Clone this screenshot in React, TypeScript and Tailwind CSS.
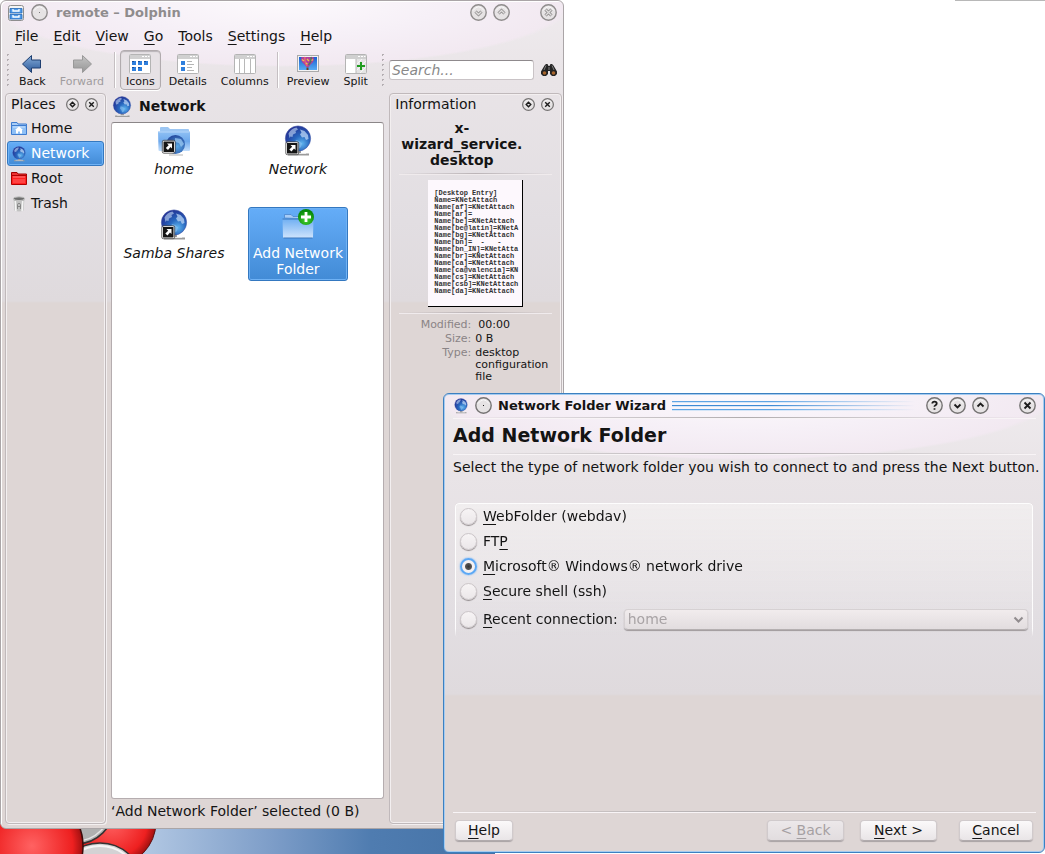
import React, { useId, useState } from 'react';
import clsx from 'clsx';

const windowBg =
  'bg-[radial-gradient(ellipse_52%_66px_at_50%_0px,#fdfafd_0%,#f6f0f7_55%,#f2e9f1_97%,transparent_100%),linear-gradient(to_bottom,#efebee_0px,#e9e4e7_80px,#e2dee2_220px,#dfdadd_300px,#ded6d5_302px)]';

interface IconProps {
  size?: number;
  className?: string;
}

const Globe: React.FC<IconProps & { link?: boolean }> = ({ size = 32, className, link }) => {
  const id = useId();
  return (
    <svg width={size} height={size} viewBox="0 0 32 32" className={clsx('shrink-0', className)} aria-hidden="true">
      <defs>
        <radialGradient id={id} cx="0.65" cy="0.7" r="0.8">
          <stop offset="0" stopColor="#5fb4ee" />
          <stop offset="0.4" stopColor="#2868bf" />
          <stop offset="1" stopColor="#22288c" />
        </radialGradient>
      </defs>
      <path d="M14 26h5v2.500h8v2H6v-2h8z" fill="#9b9b9b" />
      <path d="M9 28.500h15" stroke="#ececec" strokeWidth="1" />
      <circle cx="16" cy="13.5" r="12.600" fill={`url(#${id})`} stroke="#4356a6" strokeWidth="0.6" />
      <path d="M6.500 8.500Q9 3.500 14.500 2.500L16 4.500 13.500 6 14 8 11 9.500 10.500 12 8.500 11.500 7.500 13z" fill="#b9cff0" opacity=".65" />
      <path d="M18 4.500L22.500 6 26 10 26.500 14 24 15 22.500 12 20 12.500 18 9.500 19.500 7.500z" fill="#bcd6f6" opacity=".75" />
      <path d="M14 15l3.500 1 2.500 2.500-1 3.500-2.500 2-1.500-3.500-2-2.500z" fill="#8cc3f2" opacity=".6" />
      {link && <LinkMark />}
    </svg>
  );
};

const LinkMark = () => (
  <g>
    <rect x="4.500" y="17.500" width="11.500" height="11.500" rx="1" fill="#151515" stroke="#fff" />
    <rect x="3.800" y="16.800" width="12.900" height="12.900" rx="1.500" fill="none" stroke="#444" strokeWidth=".8" />
    <path d="M8.500 20H13.500V25L12 23.500L9.500 26.500L7.300 24.600L10.200 21.700z" fill="#fff" />
  </g>
);

const HomeLinkIcon = () => (
  <svg width="34" height="32" viewBox="0 0 34 32" aria-hidden="true">
    <defs>
      <linearGradient id="folderFill" x1="0" y1="0" x2="0" y2="1">
        <stop offset="0" stopColor="#8fc0f4" />
        <stop offset="0.5" stopColor="#6ea9ec" />
        <stop offset="1" stopColor="#c3defb" />
      </linearGradient>
      <radialGradient id="homeGlobe" cx="0.6" cy="0.6" r="0.7">
        <stop offset="0" stopColor="#5aa9e6" />
        <stop offset="1" stopColor="#1c3c93" />
      </radialGradient>
    </defs>
    <path d="M3 8V3q0-1 1-1h7l2 2h18q1 0 1 1v4z" fill="#9cc6f3" />
    <path d="M1 6.500h32V25q0 1-1 1H2.500q-1 0-1-1z" fill="url(#folderFill)" />
    <path d="M1.500 7h31" stroke="#b7d7fa" />
    <circle cx="18.500" cy="19.500" r="9.500" fill="url(#homeGlobe)" />
    <path d="M18 13l6 1 3 5-3 3-2-4-4-1z" fill="#a0cdf3" opacity=".7" />
    <path d="M12 30h14" stroke="#b5b5b5" strokeWidth="1" />
    <g transform="translate(1.500 -1.500)"><LinkMark /></g>
  </svg>
);

const AddFolderIcon = () => (
  <svg width="34" height="32" viewBox="0 0 34 32" aria-hidden="true">
    <defs>
      <linearGradient id="addFolder" x1="0" y1="0" x2="0" y2="1">
        <stop offset="0" stopColor="#6eaef2" />
        <stop offset="1" stopColor="#cfe4fc" />
      </linearGradient>
      <radialGradient id="addGreen" cx="0.5" cy="0.7" r="0.6">
        <stop offset="0" stopColor="#45d030" />
        <stop offset="1" stopColor="#078a0a" />
      </radialGradient>
    </defs>
    <path d="M3.500 9V5.500H10l2 2h18V10z" fill="#a9cdf6" stroke="#4b87cf" strokeWidth=".8" />
    <path d="M1.500 9.500h31L32 28q0 1-1 1H3q-1 0-1-1z" fill="url(#addFolder)" />
    <path d="M1.500 10h31M2.500 29h29" stroke="#3b76bd" />
    <circle cx="25" cy="8" r="8" fill="url(#addGreen)" />
    <path d="M25 3v10M20 8h10" stroke="#fff" strokeWidth="2.800" />
  </svg>
);

const SmallFolder: React.FC<{ red?: boolean }> = ({ red }) => (
  <svg width="16" height="16" viewBox="0 0 16 16" className="shrink-0" aria-hidden="true">
    <path d="M.5 5V1.500h5.500l1 1.500h8.500v2z" fill={red ? '#e33' : '#a9cdf6'} stroke={red ? '#a00000' : '#3e7cd0'} />
    <path d="M.5 4.500h15v9H.5z" fill={red ? '#f22' : '#8fc0f6'} stroke={red ? '#b00000' : '#3e7cd0'} />
    <path d="M2 6h12" stroke={red ? '#ff8080' : '#cfe4fb'} />
    {!red && <path d="M8 5.500L12 9h-1v3.500H9V10.500H7v2H5V9H4z" fill="#fff" />}
    {red && <path d="M2 8h12v4H2z" fill="#ff5a5a" opacity=".6" />}
  </svg>
);

const TrashIcon = () => (
  <svg width="16" height="16" viewBox="0 0 16 16" className="shrink-0" aria-hidden="true">
    <path d="M2.500 3L3.500 14.500q4.500 2 9 0L13.500 3z" fill="#c2c2c2" />
    <path d="M4.300 5l.6 10M11.700 5l-.6 10" stroke="#f4f4f4" strokeWidth="1.600" />
    <path d="M6.500 13V8.500q0-1 1.500-1t1.500 1V13M6.500 10.500h3" stroke="#858585" fill="none" />
    <ellipse cx="8" cy="2.700" rx="5.500" ry="1.900" fill="#6f6f6f" stroke="#c4c4c4" />
  </svg>
);

const CabinetIcon = () => (
  <svg width="16" height="16" viewBox="0 0 16 16" className="shrink-0" aria-hidden="true">
    <rect x=".5" y=".5" width="15" height="15" rx="2" fill="#f4f4f4" stroke="#8e8e8e" />
    <path d="M2 3.500h12v4.500H2zM2 9.500h12V14H2z" fill="#4f9bea" stroke="#2667b5" strokeWidth=".8" />
    <path d="M5 4v2h6V4M5 10v2h6v-2" stroke="#fff" strokeWidth="1.300" fill="none" />
  </svg>
);

const ArrowIcon: React.FC<{ forward?: boolean }> = ({ forward }) => (
  <svg width="22" height="22" viewBox="0 0 22 22" aria-hidden="true">
    <defs>
      <linearGradient id={forward ? 'arrowF' : 'arrowB'} x1="0" y1="0" x2="0" y2="1">
        <stop offset="0" stopColor={forward ? '#c4c4c4' : '#87add9'} />
        <stop offset="1" stopColor={forward ? '#969696' : '#2a5899'} />
      </linearGradient>
    </defs>
    {forward ? (
      <path d="M20.500 11L11.500 2.500V7H2.500V15H11.500V19.500z" fill="url(#arrowF)" stroke="#999" />
    ) : (
      <path d="M1.500 11L10.500 2.500V7H19.500V15H10.500V19.500z" fill="url(#arrowB)" stroke="#1f3f70" />
    )}
  </svg>
);

const ViewIcon: React.FC<{ kind: 'icons' | 'details' | 'columns' | 'split' }> = ({ kind }) => (
  <svg width="22" height="22" viewBox="0 0 22 22" aria-hidden="true">
    <rect x=".5" y="1.500" width="21" height="19" rx="1" fill="#fff" stroke="#b4b4b4" />
    <path d="M1 2h20v4H1z" fill="#d0d0d0" />
    <path d="M13 3.500h2M16 3.500h2M19 3.500h1.500" stroke="#fff" />
    {kind === 'icons' && (
      <g fill="#2f7fdd">
        <path d="M3 8h4v4H3zM9 8h4v4H9zM15 8h4v4h-4zM3 14h4v4H3zM9 14h4v4H9z" />
        <path d="M3 8h2v1H3zM9 8h2v1H9zM15 8h2v1h-2zM3 14h2v1H3zM9 14h2v1H9z" fill="#174c9a" />
      </g>
    )}
    {kind === 'details' && (
      <g>
        <path d="M4 8h4v4H4zM4 14h4v4H4z" fill="#2f7fdd" />
        <path d="M10 8.500h5M10 11.500h7M10 14.500h5M10 17.500h7" stroke="#b5b5b5" />
      </g>
    )}
    {kind === 'columns' && <path d="M5.500 6v14M10.500 6v14M16.500 6v14" stroke="#b8b8b8" />}
    {kind === 'split' && (
      <g>
        <path d="M11 6h10v14H11z" fill="#e4e4e4" />
        <path d="M11 12l6-6M11 18l10-10M15 20l6-6" stroke="#f7f7f7" />
        <path d="M11 6v14" stroke="#b8b8b8" />
        <path d="M16 9v8M12 13h8" stroke="#1f9c1f" strokeWidth="2" />
      </g>
    )}
  </svg>
);

const PreviewIcon = () => (
  <svg width="22" height="22" viewBox="0 0 22 22" aria-hidden="true">
    <defs>
      <linearGradient id="previewSky" x1="0" y1="0" x2="0" y2="1">
        <stop offset="0" stopColor="#1a5fd0" />
        <stop offset="1" stopColor="#55aaf2" />
      </linearGradient>
    </defs>
    <rect x=".5" y="2.500" width="21" height="16" fill="#f4f4f4" stroke="#aaa" />
    <path d="M2 4h18v13H2z" fill="url(#previewSky)" />
    <path d="M4.500 4h12Q18 8 14 11l-2.500 3h-2L7 11Q3 8 4.500 4z" fill="#b0409c" />
    <path d="M8 4q-1 3 2 9" stroke="#e0607a" strokeWidth="1.800" fill="none" />
    <path d="M14 4q1 4-2.500 8" stroke="#4a7a5a" strokeWidth="1.500" fill="none" />
    <path d="M5 6.500l2 1.500M10 6l2 2M14.500 7.500l1.500-1M9 10l1.500 1" stroke="#f0c04c" strokeWidth="1.300" />
    <path d="M9.500 14.500h2V17h-2z" fill="#7b3a20" />
  </svg>
);

const BinocularsIcon = () => (
  <svg width="16" height="14" viewBox="0 0 16 14" className="shrink-0" aria-hidden="true">
    <path d="M3.500 2.500L5 1h1.500L7.500 3h1L9.500 1H11l1.500 1.500L16 8.500V11l-2 2h-3L9 11V8H7v3l-2 2H2L0 11V8.500z" fill="#242424" />
    <path d="M5 2.500L3 7M11 2.500L13 7M8 4v3" stroke="#888" strokeWidth=".9" />
    <circle cx="3.500" cy="10" r="1.800" fill="#a8652c" />
    <circle cx="12.500" cy="10" r="1.800" fill="#a8652c" />
  </svg>
);

type Glyph = 'dot' | 'down' | 'up' | 'close' | 'help' | 'diamond';

const glyphPaths: Record<Glyph, string> = {
  dot: 'M8 8.500h1',
  down: 'M5.500 7.500L8.500 10.500L11.500 7.500',
  up: 'M5.500 9.500L8.500 6.500L11.500 9.500',
  close: 'M5.500 5.500L11.500 11.500M11.500 5.500L5.500 11.500',
  help: 'M6.300 6.600q0-2 2.200-2t2.200 1.900q0 1.100-1.200 1.800t-1 1.500M8.500 11.200v1.500',
  diamond: 'M8.500 5.500L11.500 8.500L8.500 11.500L5.500 8.500z',
};

const RoundButton: React.FC<{ glyph: Glyph; label: string; faded?: boolean; small?: boolean }> = ({
  glyph,
  label,
  faded,
  small,
}) => {
  const s = small ? 13 : 17;
  const outlined = faded && glyph !== 'dot';
  return (
    <button type="button" aria-label={label} className="shrink-0 block">
      <svg width={s} height={s} viewBox="0 0 17 17" className="block" aria-hidden="true">
        <circle cx="8.500" cy="8.500" r="7.700" fill="#e6e3e4" stroke={faded ? '#8f8c8c' : '#757373'} strokeWidth={small ? 1.6 : 1.4} />
        <path d="M3 6.500Q8.500-1 14 6.500" fill="none" stroke="#fff" strokeWidth=".8" />
        {outlined && <path d={glyphPaths[glyph]} fill="none" stroke="#8b8989" strokeWidth="3" />}
        <path
          d={glyphPaths[glyph]}
          fill="none"
          stroke={outlined ? '#e0dede' : faded ? '#777' : '#1c1c1c'}
          strokeWidth={outlined ? 1.4 : glyph === 'dot' ? 1 : 1.8}
        />
      </svg>
    </button>
  );
};

// "&File" style labels, the letter after & is the accelerator
const Accel: React.FC<{ text: string }> = ({ text }) => {
  const i = text.indexOf('&');
  return (
    <span className="whitespace-pre">
      {text.slice(0, i)}
      <span className="underline underline-offset-3 decoration-1">{text[i + 1]}</span>
      {text.slice(i + 2)}
    </span>
  );
};

const ToolButton: React.FC<{
  label: string;
  icon: React.ReactNode;
  active?: boolean;
  disabled?: boolean;
}> = ({ label, icon, active, disabled }) => (
  <button
    type="button"
    disabled={disabled}
    className={clsx(
      'flex flex-col items-center h-10 pt-[2px] px-[5px] rounded border text-[11px] leading-[14px]',
      active ? 'border-[#b1abae] bg-[#e6e1e5] shadow-[inset_0_1px_1px_#b9b4b8,0_1px_0_#fff]' : 'border-transparent',
      disabled ? 'text-[#a09c9e]' : 'text-[#141414]'
    )}
  >
    {icon}
    {label}
  </button>
);

const ToolSeparator = ({ className }: { className?: string }) => (
  <div className={clsx('w-[2px] h-9 shrink-0 bg-[#c5bfc2] border-r border-white', className)} />
);

const Grip = () => (
  <div className="w-[6px] h-9 shrink-0 bg-[radial-gradient(circle,#b4aeb2_1px,transparent_1px)] bg-size-[5px_5px]" />
);

const DockHeader: React.FC<{ title: string }> = ({ title }) => (
  <div className="flex items-center h-5 pl-[5px] pr-[7px] gap-[6px] shrink-0">
    <h2 className="flex-1 text-[14px]">{title}</h2>
    <RoundButton glyph="diamond" label={`Float ${title}`} small />
    <RoundButton glyph="close" label={`Close ${title}`} small />
  </div>
);

const dockFrame = 'rounded border border-[#c0b9bb] shadow-[inset_0_0_0_1px_#f3eff0,1px_1px_0_#f3eff0]';

const places = [
  { name: 'Home', icon: <SmallFolder /> },
  { name: 'Network', icon: <Globe size={16} /> },
  { name: 'Root', icon: <SmallFolder red /> },
  { name: 'Trash', icon: <TrashIcon /> },
];

const files = [
  { name: 'home', icon: <HomeLinkIcon /> },
  { name: 'Network', icon: <Globe link /> },
  { name: 'Samba Shares', icon: <Globe link /> },
  { name: 'Add Network Folder', icon: <AddFolderIcon /> },
];

const desktopEntry = [
  '[Desktop Entry]',
  'Name=KNetAttach',
  'Name[af]=KNetAttach',
  'Name[ar]=',
  'Name[be]=KNetAttach',
  'Name[be@latin]=KNetA',
  'Name[bg]=KNetAttach',
  'Name[bn]=  -   -',
  'Name[bn_IN]=KNetAtta',
  'Name[br]=KNetAttach',
  'Name[ca]=KNetAttach',
  'Name[ca@valencia]=KN',
  'Name[cs]=KNetAttach',
  'Name[csb]=KNetAttach',
  'Name[da]=KNetAttach',
];

const selection = 'bg-linear-to-b from-[#65adf8] to-[#428bd6] border-[#3478c0] text-white shadow-[inset_0_0_0_1px_#6fb2f5]';

const DolphinWindow = () => {
  const [place, setPlace] = useState('Network');
  const [selected, setSelected] = useState('Add Network Folder');

  return (
    <section
      className={clsx(
        'absolute left-0 top-0 bottom-[25px] w-[54%] min-w-[564px] flex flex-col rounded-md border border-[#aaa5a7] shadow-[inset_1px_1px_0_#fff] pl-1 pr-px pb-1',
        windowBg
      )}
    >
      <header className="flex items-center h-[23px] pl-[3px] pr-[5px] gap-[7px] shrink-0">
        <CabinetIcon />
        <RoundButton glyph="dot" label="On all desktops" faded />
        <h1 className="flex-1 pl-px text-[13px] font-bold text-[#8f8c8d]">remote – Dolphin</h1>
        <div className="flex gap-[6px]">
          <RoundButton glyph="down" label="Minimize" faded />
          <RoundButton glyph="up" label="Maximize" faded />
        </div>
        <div className="pl-[23px]">
          <RoundButton glyph="close" label="Close" faded />
        </div>
      </header>

      <nav className="flex items-center h-6 pl-[10px] gap-[15px] shrink-0">
        {['&File', '&Edit', '&View', '&Go', '&Tools', '&Settings', '&Help'].map(m => (
          <button key={m} type="button"><Accel text={m} /></button>
        ))}
      </nav>

      <div className="flex items-center h-[44px] gap-[2px] pr-[3px] shrink-0">
        <Grip />
        <ToolButton label="Back" icon={<ArrowIcon />} />
        <ToolButton label="Forward" icon={<ArrowIcon forward />} disabled />
        <ToolSeparator className="mx-[2px]" />
        <ToolButton label="Icons" icon={<ViewIcon kind="icons" />} active />
        <ToolButton label="Details" icon={<ViewIcon kind="details" />} />
        <ToolButton label="Columns" icon={<ViewIcon kind="columns" />} />
        <ToolSeparator />
        <ToolButton label="Preview" icon={<PreviewIcon />} />
        <ToolButton label="Split" icon={<ViewIcon kind="split" />} />
        <div className="pl-1 pr-px"><Grip /></div>
        <input
          type="search"
          aria-label="Search"
          placeholder="Search..."
          className="flex-1 min-w-0 h-5 px-[2px] rounded-[3px] border border-[#c9c3c6] border-t-[#8f8a8d] bg-white outline-none placeholder:italic placeholder:text-[#888]"
        />
        <button type="button" aria-label="Find" className="pl-[5px] pr-[2px]"><BinocularsIcon /></button>
      </div>

      <div className="flex flex-1 min-h-0 gap-[5px] pt-[1px]">
        <aside className={clsx('w-[101px] shrink-0 flex flex-col', dockFrame)}>
          <DockHeader title="Places" />
          <ul className="px-[1px] pt-[2px]">
            {places.map(p => (
              <li key={p.name}>
                <button
                  type="button"
                  onClick={() => setPlace(p.name)}
                  className={clsx(
                    'w-full h-[25px] flex items-center gap-1 px-[3px] rounded-[3px] border',
                    place === p.name ? selection : 'border-transparent'
                  )}
                >
                  {p.icon}
                  {p.name}
                </button>
              </li>
            ))}
          </ul>
        </aside>

        <main className="flex-1 min-w-0 flex flex-col">
          <div className="flex items-center h-[27px] mb-[2px] gap-[6px] shrink-0">
            <Globe size={22} />
            <span className="font-bold">Network</span>
          </div>
          <ul className="flex-1 min-h-0 bg-white rounded-[3px] border border-[#b5adaf] border-t-[#8b8688] grid grid-cols-[124px_124px] auto-rows-[84px] content-start justify-items-center">
            {files.map(f => (
              <li key={f.name}>
                <button
                  type="button"
                  onClick={() => setSelected(f.name)}
                  className={clsx(
                    'flex flex-col items-center w-[100px] pt-[1px] pb-[3px] rounded-[3px] border leading-4',
                    selected === f.name ? selection : 'border-transparent italic'
                  )}
                >
                  {f.icon}
                  <span className={clsx('pt-1', f.name === 'Samba Shares' && 'whitespace-nowrap')}>{f.name}</span>
                </button>
              </li>
            ))}
          </ul>
          <p className="h-[25px] shrink-0 leading-[25px]">‘Add Network Folder’ selected (0 B)</p>
        </main>

        <aside className={clsx('w-[173px] shrink-0 flex flex-col', dockFrame)}>
          <DockHeader title="Information" />
          <div className="px-[9px] pt-[6px]">
            <h3 className="leading-4 font-bold text-center pr-[28px]">
              x-<br />wizard_service.<br />desktop
            </h3>
            <div className="h-px mt-[5px] bg-linear-to-r from-transparent via-[#bbb4b7] to-transparent shadow-[0_1px_0_#f0ebed]" />
            <pre className="w-[95px] h-[127px] mt-[6px] ml-[29px] pl-[6px] pt-[10px] overflow-hidden bg-[#fdf8fd] border-r border-b border-black font-['Liberation_Mono',monospace] font-bold text-[7px] leading-[7px] text-[#333]">
              {desktopEntry.join('\n')}
            </pre>
            <div className="h-px mt-[5px] bg-linear-to-r from-transparent via-[#bbb4b7] to-transparent shadow-[0_1px_0_#f0ebed]" />
            <dl className="grid grid-cols-[72px_1fr] gap-x-1 gap-y-[2px] pt-[6px] text-[11px] leading-3">
              <dt className="text-right text-[#8a8486]">Modified:</dt>
              <dd className="pl-[3px]">00:00</dd>
              <dt className="text-right text-[#8a8486]">Size:</dt>
              <dd>0 B</dd>
              <dt className="text-right text-[#8a8486]">Type:</dt>
              <dd>desktop configuration file</dd>
            </dl>
          </div>
        </aside>
      </div>
    </section>
  );
};

const connectionTypes = [
  '&WebFolder (webdav)',
  'FT&P',
  '&Microsoft® Windows® network drive',
  '&Secure shell (ssh)',
  '&Recent connection:',
];

const PushButton: React.FC<{ text: string; className?: string; disabled?: boolean }> = ({ text, className, disabled }) => (
  <button
    type="button"
    disabled={disabled}
    className={clsx(
      'h-[21px] rounded border border-[#d0cacc] border-b-[#b1abad] bg-linear-to-b shadow-[0_1px_1px_#a8a2a4]',
      disabled ? 'text-[#a5a0a2] from-[#ece8ea] to-[#e2dddf]' : 'text-[#141414] from-[#fbf9fa] to-[#e9e5e7]',
      className
    )}
  >
    <Accel text={text} />
  </button>
);

const Rule = () => (
  <div className="h-px shrink-0 bg-linear-to-r from-transparent via-[#b0acae] to-transparent shadow-[0_1px_0_#f8f4f6]" />
);

const WizardWindow = () => {
  const [choice, setChoice] = useState(2);

  return (
    <section
      className={clsx(
        'absolute left-[443px] right-0 top-[393px] bottom-[1px] min-w-[602px] flex flex-col rounded-md border border-[#3c80c0] shadow-[inset_0_0_0_1px_#a5cbf0] pl-[9px] pr-2',
        windowBg
      )}
    >
      <header className="flex items-center h-[23px] gap-[6px] shrink-0">
        <Globe size={16} />
        <RoundButton glyph="dot" label="On all desktops" />
        <h1 className="text-[13px] font-bold">Network Folder Wizard</h1>
        <div className="flex-1 flex flex-col gap-[2px] pt-px mask-[linear-gradient(to_right,#000_40%,transparent_98%)]" aria-hidden="true">
          <div className="h-[2px] bg-[#5fa4e4] border-b border-[#d3e5f7]" />
          <div className="h-[2px] bg-[#3f8ad4] border-b border-[#d3e5f7]" />
          <div className="h-[2px] bg-[#5fa4e4] border-b border-[#d3e5f7]" />
        </div>
        <div className="flex gap-[6px]">
          <RoundButton glyph="help" label="Help" />
          <RoundButton glyph="down" label="Minimize" />
          <RoundButton glyph="up" label="Maximize" />
        </div>
        <div className="pl-6">
          <RoundButton glyph="close" label="Close" />
        </div>
      </header>
      <Rule />
      <h2 className="text-[19px] leading-[35px] font-bold shrink-0">Add Network Folder</h2>
      <Rule />
      <p className="leading-[26px] whitespace-nowrap">Select the type of network folder you wish to connect to and press the Next button.</p>

      <div className="mt-[23px] ml-[2px] mr-[3px] px-[2px] pb-[3px] rounded border border-b-0 border-white/90 bg-linear-to-b from-[#f0edee] to-transparent shadow-[0_-1px_0_#cdc7ca] flex flex-col mask-[linear-gradient(to_bottom,#000_93%,transparent)]">
        {connectionTypes.map((t, i) => (
          <div key={t} className={clsx('flex items-center', i < 4 ? 'h-[25px]' : 'h-[31px]')}>
            <label className="flex items-center gap-[6px] shrink-0 pl-[2px]">
              <input
                type="radio"
                name="connection"
                checked={choice === i}
                onChange={() => setChoice(i)}
                className="appearance-none size-[17px] rounded-full border border-[#cbc5c8] bg-linear-to-b from-[#f7f4f5] to-[#ebe7e9] shadow-[0_1px_1px_#8f898b] checked:border-2 checked:border-[#5ca8f5] checked:shadow-[0_0_2px_#5ca8f5] checked:bg-[radial-gradient(circle,#333_0px,#555_3px,#f4f1f2_4px)]"
              />
              <Accel text={t} />
            </label>
            {i === 4 && (
              <div className="relative flex-1 ml-[6px] mr-[2px]">
                <select
                  disabled
                  aria-label="Recent connection"
                  className="block appearance-none w-full h-[21px] pl-[3px] rounded border border-[#d6d1d3] border-b-[#b0aaac] bg-linear-to-b from-[#f1eced] to-[#e2dddf] shadow-[0_1px_1px_#8c8688] text-[#a8a3a5] opacity-100"
                >
                  <option>home</option>
                </select>
                <svg width="11" height="8" viewBox="0 0 11 8" className="absolute right-1 top-[7px] pointer-events-none" aria-hidden="true">
                  <path d="M1.500 1.500L5.500 5.500L9.500 1.500" fill="none" stroke="#918c8e" strokeWidth="2" />
                </svg>
              </div>
            )}
          </div>
        ))}
      </div>

      <div className="flex-1" />
      <Rule />
      <footer className="flex items-center h-10 pb-1 pl-[2px] pr-[3px] shrink-0">
        <PushButton text="&Help" className="w-[58px]" />
        <div className="flex-1" />
        <PushButton text="< &Back" className="w-[77px]" disabled />
        <PushButton text="&Next >" className="w-[77px] ml-4" />
        <PushButton text="&Cancel" className="w-[74px] ml-[22px]" />
      </footer>
    </section>
  );
};

const Wallpaper = () => (
  <svg className="absolute left-0 bottom-0" width="495" height="30" viewBox="0 824 495 30" aria-hidden="true">
    <defs>
      <linearGradient id="sky" x1="0" x2="1">
        <stop offset="0.3" stopColor="#b0c6e2" />
        <stop offset="0.55" stopColor="#7d9dc8" />
        <stop offset="0.75" stopColor="#4f7cb0" />
        <stop offset="1" stopColor="#4472a6" />
      </linearGradient>
      <radialGradient id="ballRed">
        <stop offset="0" stopColor="#ff6262" />
        <stop offset="0.8" stopColor="#ee2020" />
        <stop offset="1" stopColor="#a01010" />
      </radialGradient>
    </defs>
    <path d="M0 824h495v30H0z" fill="url(#sky)" />
    <circle cx="112" cy="822" r="44" fill="url(#ballRed)" stroke="#5c1010" />
    <circle cx="76" cy="806" r="38" fill="#b0b0b0" stroke="#333" strokeWidth="1.500" />
    <circle cx="76" cy="806" r="35" fill="none" stroke="#e4e4e4" strokeWidth="1.500" />
    <circle cx="100" cy="886" r="43" fill="#d4d2d4" stroke="#333" strokeWidth="1.500" />
    <circle cx="100" cy="886" r="40" fill="none" stroke="#f5f5f5" strokeWidth="2" />
    <circle cx="32" cy="846" r="51" fill="url(#ballRed)" stroke="#3c0a0a" strokeWidth="1.500" />
  </svg>
);

const App: React.FC = () => (
  <div className="relative h-screen min-h-[700px] overflow-hidden bg-white text-[14px] leading-[17px] text-[#141414] font-['DejaVu_Sans',sans-serif]">
    <div className="absolute right-0 top-0 w-[90px] h-px bg-[#b8b8b8]" />
    <Wallpaper />
    <DolphinWindow />
    <WizardWindow />
  </div>
);

export default App;
